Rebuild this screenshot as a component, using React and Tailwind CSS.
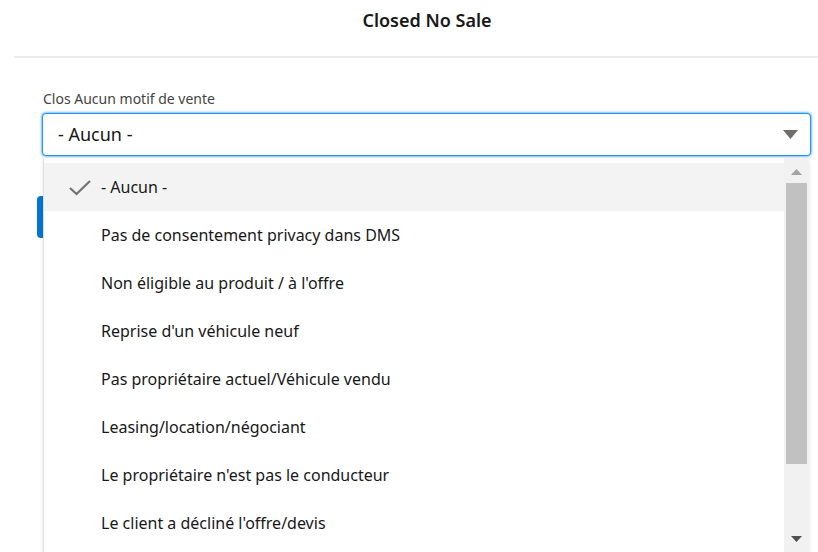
import React from "react";

const options = [
  "- Aucun -",
  "Pas de consentement privacy dans DMS",
  "Non éligible au produit / à l'offre",
  "Reprise d'un véhicule neuf",
  "Pas propriétaire actuel/Véhicule vendu",
  "Leasing/location/négociant",
  "Le propriétaire n'est pas le conducteur",
  "Le client a décliné l'offre/devis",
];

const Check = () => (
  <svg width="24" height="17" viewBox="0 0 24 17" className="shrink-0">
    <path d="M2 9 L8.5 15 L22 2" fill="none" stroke="#747474" strokeWidth="2.3" />
  </svg>
);

const Option = ({ label, selected }) => (
  <li
    className={`h-12 flex items-center pl-[24px] text-[16px] text-[#181818] ${
      selected ? "bg-[#f3f3f3]" : ""
    }`}
  >
    <span className="w-[33px] flex items-center">{selected && <Check />}</span>
    <span>{label}</span>
  </li>
);

export default function App() {
  return (
    <div className="w-[818px] h-[552px] overflow-hidden bg-white font-['Segoe_UI','Noto_Sans',sans-serif]">
      {/* modal header */}
      <header className="h-[56px] flex items-center justify-center pl-[36px] pb-[16px]">
        <h2 className="text-[18px] font-semibold text-[#181818]">Closed No Sale</h2>
      </header>
      <div className="ml-[14px] h-[2px] bg-[#ececec]" />

      <div className="pl-[42px] pr-[7px] pt-[31px]">
        <label className="block text-[14px] leading-[20px] text-[#444444] pl-px mb-[4px]">
          Clos Aucun motif de vente
        </label>

        <div className="relative">
          {/* combobox */}
          <div className="h-[43px] rounded-[4px] border border-[#1b96ff] shadow-[0_0_3px_#0176d3] flex items-center pl-[15px] pr-[12px] bg-white">
            <span className="flex-1 text-[18px] text-[#181818]">- Aucun -</span>
            <svg width="15" height="10" viewBox="0 0 15 10">
              <path d="M0 0 H15 L7.5 9 Z" fill="#706e6b" />
            </svg>
          </div>

          {/* button sitting behind the open listbox */}
          <div className="mt-[40px] -ml-[5px] w-[120px] h-[42px] rounded-[4px] bg-[#0176d3]" />

          {/* listbox */}
          <div className="absolute left-px right-[2px] top-[45px] h-[396px] overflow-hidden bg-white border-l border-[#e0e0e0] shadow-[0_2px_4px_rgba(0,0,0,0.12)] flex">
            <ul className="flex-1 pt-[5px]">
              {options.map((o, i) => (
                <Option key={o} label={o} selected={i === 0} />
              ))}
            </ul>
            {/* scrollbar */}
            <div className="w-[25px] bg-[#f1f1f1] flex flex-col items-center">
              <div className="h-[25px] flex items-center justify-center pt-[3px]">
                <svg width="11" height="6" viewBox="0 0 11 6">
                  <path d="M5.5 0 L11 6 H0 Z" fill="#a3a3a3" />
                </svg>
              </div>
              <div className="w-[21px] h-[281px] bg-[#c1c1c1]" />
              <div className="flex-1" />
              <div className="h-[20px] flex items-start justify-center pt-[2px]">
                <svg width="11" height="6" viewBox="0 0 11 6">
                  <path d="M0 0 H11 L5.5 6 Z" fill="#505050" />
                </svg>
              </div>
            </div>
          </div>
        </div>
      </div>
    </div>
  );
}
